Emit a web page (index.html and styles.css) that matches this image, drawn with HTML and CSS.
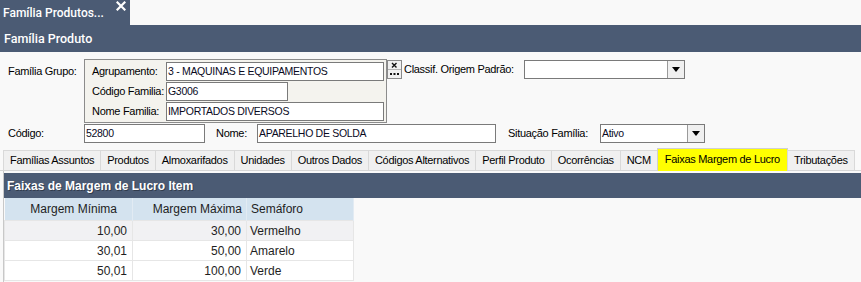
FILE: index.html
```html
<!DOCTYPE html>
<html lang="pt-BR">
<head>
  <meta charset="UTF-8" />
  <title>Família Produto</title>
  <link rel="stylesheet" href="styles.css">
</head>
<body>
  <div class="doc-tabs">
    <div class="doc-tab">
      <span class="doc-tab-label">Família Produtos...</span>
      <svg class="doc-close" width="10" height="10" viewBox="0 0 10 10"><path d="M1.5 1.5 L8.5 8.5 M8.5 1.5 L1.5 8.5" stroke="#fff" stroke-width="2.2" stroke-linecap="square"/></svg>
    </div>
  </div>
  <div class="title-bar">Família Produto</div>

  <div class="form">
    <div class="row">
      <span class="lbl lbl-top">Família Grupo:</span>
      <div class="group">
        <div class="g-row"><span class="g-lbl">Agrupamento:</span><div class="field f-agrup">3 - MAQUINAS E EQUIPAMENTOS</div></div>
        <div class="g-row"><span class="g-lbl">Código Familia:</span><div class="field f-cod-fam">G3006</div></div>
        <div class="g-row"><span class="g-lbl">Nome Familia:</span><div class="field f-agrup">IMPORTADOS DIVERSOS</div></div>
      </div>
      <svg class="lookup" width="15" height="19" viewBox="0 0 15 19">
        <rect x="0.5" y="0.5" width="14" height="18" fill="#f0f0f0" stroke="#8a8a8a"/>
        <line x1="1" y1="9.5" x2="14" y2="9.5" stroke="#b4b4b4"/>
        <path d="M5 3 L9.5 7.5 M9.5 3 L5 7.5" stroke="#111" stroke-width="1.4"/>
        <rect x="3" y="13" width="2" height="2" fill="#111"/>
        <rect x="6.5" y="13" width="2" height="2" fill="#111"/>
        <rect x="10" y="13" width="2" height="2" fill="#111"/>
      </svg>
      <span class="lbl lbl-classif">Classif. Origem Padrão:</span>
      <div class="select sel-classif">
        <div class="select-value"></div>
        <div class="select-arrow"><svg width="8" height="5" viewBox="0 0 8 5"><polygon points="0,0 8,0 4,5" fill="#000"/></svg></div>
      </div>
    </div>

    <div class="row row-two">
      <span class="lbl">Código:</span>
      <div class="field f-codigo">52800</div>
      <span class="lbl lbl-nome">Nome:</span>
      <div class="field f-nome">APARELHO DE SOLDA</div>
      <span class="lbl lbl-sit">Situação Família:</span>
      <div class="select sel-sit">
        <div class="select-value">Ativo</div>
        <div class="select-arrow"><svg width="8" height="5" viewBox="0 0 8 5"><polygon points="0,0 8,0 4,5" fill="#000"/></svg></div>
      </div>
    </div>
  </div>

  <div class="tabs">
    <div class="tab">Famílias Assuntos</div>
    <div class="tab">Produtos</div>
    <div class="tab">Almoxarifados</div>
    <div class="tab">Unidades</div>
    <div class="tab">Outros Dados</div>
    <div class="tab">Códigos Alternativos</div>
    <div class="tab">Perfil Produto</div>
    <div class="tab">Ocorrências</div>
    <div class="tab">NCM</div>
    <div class="tab tab-active">Faixas Margem de Lucro</div>
    <div class="tab">Tributações</div>
  </div>

  <div class="panel">
    <div class="panel-title">Faixas de Margem de Lucro Item</div>
    <table class="grid">
      <colgroup>
        <col class="col-min">
        <col class="col-max">
        <col class="col-sem">
      </colgroup>
      <thead>
        <tr>
          <th class="c-min">Margem Mínima</th>
          <th class="c-max">Margem Máxima</th>
          <th class="c-sem">Semáforo</th>
        </tr>
      </thead>
      <tbody>
        <tr class="row-sel"><td class="num">10,00</td><td class="num">30,00</td><td>Vermelho</td></tr>
        <tr><td class="num">30,01</td><td class="num">50,00</td><td>Amarelo</td></tr>
        <tr><td class="num">50,01</td><td class="num">100,00</td><td>Verde</td></tr>
      </tbody>
    </table>
  </div>
</body>
</html>
```

FILE: styles.css
```css
body {
  margin: 0;
  width: 861px;
  height: 282px;
  overflow: hidden;
  background: #f9f9f9;
  font-family: 'Liberation Sans', Arial, sans-serif;
  font-size: 11px;
  color: #000;
}
.doc-tabs {
  height: 25px;
}
.doc-tab {
  width: 130px;
  height: 25px;
  box-sizing: border-box;
  padding: 0 4px 0 3px;
  display: flex;
  justify-content: space-between;
  align-items: flex-start;
  background: #4b5b74;
  color: #fff;
  font-family: Roboto, sans-serif;
  font-weight: 500;
  font-size: 12px;
}
.doc-tab-label {
  line-height: 27px;
}
.doc-close {
  margin-top: 1px;
}
.title-bar {
  height: 27px;
  line-height: 28px;
  padding-left: 4px;
  background: #4b5b74;
  color: #fff;
  font-family: Roboto, sans-serif;
  font-weight: 500;
  font-size: 12.5px;
}
.form {
  padding: 7px 0 0 8px;
}
.row {
  display: flex;
  align-items: flex-start;
}
.row-two {
  margin-top: 1px;
}
.lbl {
  flex: none;
  width: 76px;
  line-height: 19px;
  letter-spacing: -0.3px;
  white-space: nowrap;
}
.lbl-top {
  margin-top: 3px;
}
.group {
  flex: none;
  width: 292px;
  padding: 2px 2px 1px 7px;
  border: 1px solid #8c8c8c;
  background: #f4f3ee;
}
.g-row {
  display: flex;
  height: 19px;
  margin-bottom: 1px;
}
.g-row:last-child {
  margin-bottom: 0;
}
.g-lbl {
  width: 74px;
  line-height: 19px;
  letter-spacing: -0.3px;
  white-space: nowrap;
}
.field {
  flex: none;
  height: 19px;
  box-sizing: border-box;
  padding: 0 1px;
  border: 1px solid #7a7a7a;
  background: #fff;
  line-height: 17px;
  font-size: 10.5px;
  letter-spacing: -0.3px;
  white-space: nowrap;
  overflow: hidden;
  color: #0a0a1e;
}
.f-agrup { width: 218px; }
.f-cod-fam { width: 122px; }
.f-codigo { width: 121px; }
.f-nome { width: 239px; }
.lookup {
  flex: none;
  margin-top: 1px;
}
.lbl-classif {
  width: 120px;
  margin-left: 2px;
  margin-top: 1px;
}
.lbl-nome {
  width: 41px;
  margin-left: 11px;
}
.lbl-sit {
  width: 92px;
  margin-left: 12px;
}
.select {
  flex: none;
  display: flex;
  height: 19px;
  box-sizing: border-box;
  border: 1px solid #7a7a7a;
  background: #fff;
}
.sel-classif {
  width: 161px;
  margin-top: 1px;
}
.sel-sit {
  width: 105px;
}
.select-value {
  flex: 1;
  padding: 0 1px;
  line-height: 17px;
  font-size: 10.5px;
  letter-spacing: -0.3px;
  color: #0a0a1e;
}
.select-arrow {
  width: 16px;
  display: flex;
  align-items: center;
  justify-content: center;
  border-left: 1px solid #9a9a9a;
  background: #f0f0f0;
}
.tabs {
  display: flex;
  align-items: flex-end;
  height: 21px;
  margin-top: 6px;
  padding-left: 4px;
  border-bottom: 1px solid #d6d6d6;
}
.tab {
  height: 20px;
  box-sizing: border-box;
  margin-left: -1px;
  padding: 0 6px;
  border: 1px solid #d9d9d9;
  border-bottom: none;
  background: #f0f0f0;
  line-height: 19px;
  letter-spacing: -0.3px;
  white-space: nowrap;
}
.tab-active {
  height: 23px;
  margin-bottom: -1px;
  padding: 0 7px;
  background: #ffff00;
  border-color: #d0d0d0;
  line-height: 20px;
}
.panel {
  margin-left: 3px;
  padding-top: 2px;
  height: 120px;
  border-left: 1px solid #c8c8c8;
}
.panel-title {
  height: 25px;
  line-height: 26px;
  padding-left: 3px;
  background: #4b5b74;
  color: #fff;
  font-weight: bold;
  font-size: 12px;
  text-shadow: 1px 1px 0 rgba(0, 0, 0, 0.35);
}
.grid {
  table-layout: fixed;
  width: 349px;
  border-collapse: collapse;
  font-size: 12px;
  color: #1e1e1e;
}
.col-min { width: 128px; }
.col-max { width: 114px; }
.col-sem { width: 107px; }
.grid th {
  height: 22px;
  padding: 0 4px;
  background: #d4e3ef;
  font-weight: normal;
  border-right: 1px solid #e2ebf3;
  white-space: nowrap;
}
.grid td {
  height: 19px;
  padding: 0 3px;
  background: #fff;
  border: 1px solid #e6e6e6;
}
.grid .row-sel td {
  background: #f1f1f3;
}
.c-min {
  text-align: right;
  padding-right: 15px !important;
}
.c-max {
  text-align: right;
}
.c-sem {
  text-align: left;
}
.grid .num {
  text-align: right;
  padding-right: 5px;
}
```
